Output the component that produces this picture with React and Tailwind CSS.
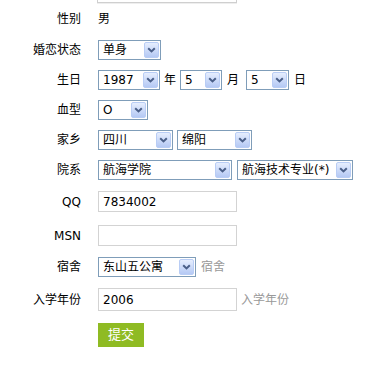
import React from "react";

const font = { fontFamily: '"DejaVu Sans", "Noto Sans CJK SC", sans-serif' };

const Arrow = () => (
    <span className="ml-auto mr-px flex h-[16px] w-[15px] shrink-0 items-center justify-center rounded-[2px] border border-[#b9cdf5] bg-gradient-to-b from-[#e6eefe] to-[#b5c9f4]">
        <svg width="9" height="6" viewBox="0 0 9 6">
            <path d="M1.2 1.2 L4.5 4.4 L7.8 1.2" stroke="#4a5f88" strokeWidth="2" fill="none" />
        </svg>
    </span>
);

const Select = ({ w, children }) => (
    <div className={"flex h-[20px] shrink-0 items-center border border-[#7f9db9] bg-white pl-[4px] text-[12px] text-black " + w}>
        <span className="whitespace-nowrap leading-none">{children}</span>
        <Arrow />
    </div>
);

const Input = ({ value, h }) => (
    <div className={"flex w-[139px] shrink-0 items-center border border-[#d3d3d3] bg-white pl-[4px] text-[12px] text-black " + h}>
        {value}
    </div>
);

const Row = ({ label, mt, children }) => (
    <div className={"flex items-center " + mt}>
        <div className="w-[81px] shrink-0 text-right text-[12px] leading-none text-black">{label}</div>
        <div className="ml-[17px] flex items-center">{children}</div>
    </div>
);

export default function App() {
    return (
        <div className="h-[366px] w-[372px] overflow-hidden bg-white" style={font}>
            {/* cut-off input at the top */}
            <div className="ml-[97px] h-[3px] w-[140px] border-x border-b border-[#cfcfcf] shadow-[0_1px_0_#eeeeee]"></div>

            <Row label="性别" mt="mt-[6px] h-[20px]">
                <span className="text-[12px] text-black">男</span>
            </Row>

            <Row label="婚恋状态" mt="mt-[11px]">
                <Select w="w-[63px]">单身</Select>
            </Row>

            <Row label="生日" mt="mt-[10px]">
                <Select w="w-[62px]">1987</Select>
                <span className="ml-[4px] text-[12px]">年</span>
                <span className="ml-[4px]"><Select w="w-[42px]">5</Select></span>
                <span className="ml-[5px] text-[12px]">月</span>
                <span className="ml-[7px]"><Select w="w-[43px]">5</Select></span>
                <span className="ml-[5px] text-[12px]">日</span>
            </Row>

            <Row label="血型" mt="mt-[10px]">
                <Select w="w-[50px]">O</Select>
            </Row>

            <Row label="家乡" mt="mt-[10px]">
                <Select w="w-[75px]">四川</Select>
                <span className="ml-[4px]"><Select w="w-[75px]">绵阳</Select></span>
            </Row>

            <Row label="院系" mt="mt-[10px]">
                <Select w="w-[134px]">航海学院</Select>
                <span className="ml-[5px]"><Select w="w-[116px]">航海技术专业(*)</Select></span>
            </Row>

            <Row label="QQ" mt="mt-[11px]">
                <Input value="7834002" h="h-[21px]" />
            </Row>

            <Row label="MSN" mt="mt-[13px]">
                <Input value="" h="h-[21px]" />
            </Row>

            <Row label="宿舍" mt="mt-[11px]">
                <Select w="w-[98px]">东山五公寓</Select>
                <span className="ml-[5px] text-[12px] text-[#999999]">宿舍</span>
            </Row>

            <Row label="入学年份" mt="mt-[11px]">
                <Input value="2006" h="h-[23px]" />
                <span className="ml-[4px] text-[12px] text-[#999999]">入学年份</span>
            </Row>

            <div className="ml-[98px] mt-[11px]">
                <button className="h-[24px] w-[46px] bg-[#8fbb23] text-[13px] text-white">提交</button>
            </div>
        </div>
    );
}
